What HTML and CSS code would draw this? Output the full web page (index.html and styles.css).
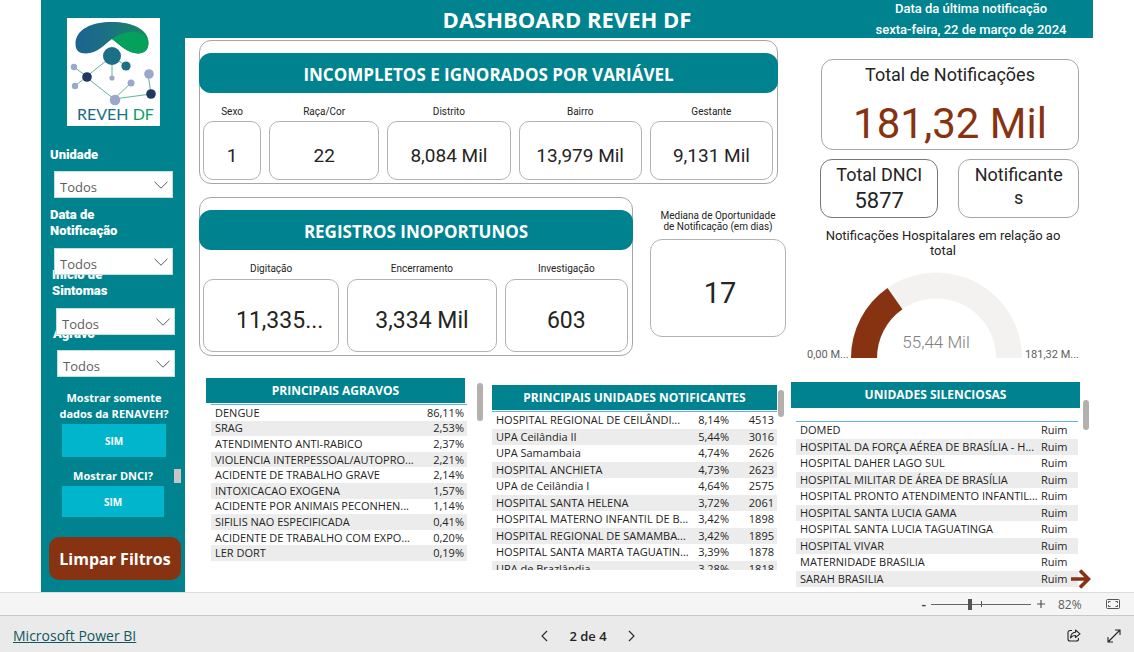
FILE: index.html
```html
<!DOCTYPE html>
<html lang="pt-BR">
<head>
<meta charset="utf-8">
<title>Dashboard REVEH DF</title>
<link rel="stylesheet" href="styles.css">
</head>
<body>
<div class="report">
  <aside class="sidebar">
    <svg class="logo" viewBox="0 0 93 108" role="img" aria-label="REVEH DF">
      <defs>
        <linearGradient id="cap" x1="0" x2="1" y1="0" y2="0">
          <stop offset="0" stop-color="#1c6391"/><stop offset="0.5" stop-color="#1b7380"/><stop offset="1" stop-color="#158a62"/>
        </linearGradient>
        <linearGradient id="name" x1="0" x2="1" y1="0" y2="0">
          <stop offset="0" stop-color="#1b6485"/><stop offset="0.6" stop-color="#1b7482"/><stop offset="0.75" stop-color="#0c9a66"/><stop offset="1" stop-color="#07a05e"/>
        </linearGradient>
      </defs>
      <rect width="93" height="108" fill="#fff"/>
      <path d="M8.500 26C8.500 11 25 4 45 4s36.500 7 36.500 21c0 7-4 10.500-10.500 10.500C61 35.500 53 27 45 21c-8 6-15 14.500-26 14.500-7 0-10.500-3-10.500-9.500z" fill="url(#cap)"/>
      <path d="M45 21c10-8 30-11 36 0 2 9-3 14.500-10 14.500C61 35.500 53 27 45 21z" fill="#04a05c"/>
      <g stroke="#5cb894" stroke-width="1" fill="none">
        <path d="M7 49l12 9M8 68l11-9M19 59L45 38v22M45 38l14 10M19 59l28 22 17-16M47 81l37-5-3-20"/>
      </g>
      <circle cx="45" cy="38" r="9" fill="#1b6f86"/>
      <circle cx="59" cy="48" r="4.6" fill="#1b6f86"/>
      <g fill="#9ba9c9">
        <circle cx="7" cy="49" r="3.2"/><circle cx="8" cy="68" r="3.2"/><circle cx="45" cy="60" r="2.6"/>
        <circle cx="64" cy="65" r="3.5"/><circle cx="82" cy="56" r="4.8"/><circle cx="48" cy="82" r="5.3"/>
      </g>
      <circle cx="20" cy="59" r="4.8" fill="#203864"/>
      <circle cx="84" cy="76" r="4.8" fill="#203864"/>
      <text x="10" y="102" class="logo-name" fill="url(#name)">REVEH DF</text>
    </svg>

    <div class="filter filter-unit">
      <label for="unidade">Unidade</label>
      <div class="pick"><select id="unidade"><option>Todos</option></select>
        <svg viewBox="0 0 14 8"><path d="M.5.8L7 7.200 13.500.8"/></svg></div>
    </div>
    <div class="filter filter-date">
      <label for="data">Data de Notificação</label>
      <div class="pick"><select id="data"><option>Todos</option></select>
        <svg viewBox="0 0 14 8"><path d="M.5.8L7 7.200 13.500.8"/></svg></div>
    </div>
    <div class="filter filter-onset">
      <label for="inicio">Início de Sintomas</label>
      <div class="pick"><select id="inicio"><option>Todos</option></select>
        <svg viewBox="0 0 14 8"><path d="M.5.8L7 7.200 13.500.8"/></svg></div>
    </div>
    <div class="filter filter-disease">
      <label for="agravo">Agravo</label>
      <div class="pick"><select id="agravo"><option>Todos</option></select>
        <svg viewBox="0 0 14 8"><path d="M.5.8L7 7.200 13.500.8"/></svg></div>
    </div>

    <div class="toggle">
      <p id="q-renaveh">Mostrar somente<br>dados da RENAVEH?</p>
      <button type="button" aria-describedby="q-renaveh">SIM</button>
    </div>
    <div class="toggle toggle-dnci">
      <p id="q-dnci">Mostrar DNCI?</p>
      <button type="button" aria-describedby="q-dnci">SIM</button>
      <span class="side-thumb"></span>
    </div>
    <button type="button" class="clear">Limpar Filtros</button>
  </aside>

  <main class="main">
    <header class="header">
      <h1>DASHBOARD REVEH DF</h1>
      <p class="updated">Data da última notificação<br>sexta-feira, 22 de março de 2024</p>
    </header>

    <div class="overview">
      <div class="groups">
        <section class="group">
          <h2>INCOMPLETOS E IGNORADOS POR VARIÁVEL</h2>
          <div class="cards cards-five">
            <div class="metric"><h3>Sexo</h3><p>1</p></div>
            <div class="metric"><h3>Raça/Cor</h3><p>22</p></div>
            <div class="metric"><h3>Distrito</h3><p>8,084 Mil</p></div>
            <div class="metric"><h3>Bairro</h3><p>13,979 Mil</p></div>
            <div class="metric"><h3>Gestante</h3><p>9,131 Mil</p></div>
          </div>
        </section>
        <div class="late-row">
          <section class="group group-late">
            <h2>REGISTROS INOPORTUNOS</h2>
            <div class="cards cards-three">
              <div class="metric"><h3>Digitação</h3><p class="cut">11,335...</p></div>
              <div class="metric"><h3>Encerramento</h3><p>3,334 Mil</p></div>
              <div class="metric"><h3>Investigação</h3><p>603</p></div>
            </div>
          </section>
          <div class="median">
            <h3>Mediana de Oportunidade<br>de Notificação (em dias)</h3>
            <p>17</p>
          </div>
        </div>
      </div>

      <div class="totals">
        <div class="total-card"><h3>Total de Notificações</h3><p>181,32 Mil</p></div>
        <div class="small-cards">
          <div class="small-card dark"><h3>Total DNCI</h3><p>5877</p></div>
          <div class="small-card"><h3>Notificante<br>s</h3></div>
        </div>
        <h3 class="gauge-title">Notificações Hospitalares em relação ao<br>total</h3>
        <svg class="gauge" viewBox="0 0 272 90">
          <path d="M44 86A85.500 85.500 0 0 1 215 86H189A59.500 59.500 0 0 0 70 86Z" fill="#f3f2f1"/>
          <path d="M44 86A85.500 85.500 0 0 1 80.500 16L95.400 37.300A59.500 59.500 0 0 0 70 86Z" fill="#873312"/>
          <text x="129" y="76" class="gauge-value" text-anchor="middle">55,44 Mil</text>
          <text x="0" y="86" class="gauge-end">0,00 M...</text>
          <text x="272" y="86" class="gauge-end" text-anchor="end">181,32 M...</text>
        </svg>
      </div>
    </div>

    <div class="tables">
      <section class="panel panel-diseases">
        <div class="panel-body">
          <h2>PRINCIPAIS AGRAVOS</h2>
          <table>
            <tr><td>DENGUE</td><td>86,11%</td></tr>
            <tr><td>SRAG</td><td>2,53%</td></tr>
            <tr><td>ATENDIMENTO ANTI-RABICO</td><td>2,37%</td></tr>
            <tr><td>VIOLENCIA INTERPESSOAL/AUTOPRO...</td><td>2,21%</td></tr>
            <tr><td>ACIDENTE DE TRABALHO GRAVE</td><td>2,14%</td></tr>
            <tr><td>INTOXICACAO EXOGENA</td><td>1,57%</td></tr>
            <tr><td>ACIDENTE POR ANIMAIS PECONHEN...</td><td>1,14%</td></tr>
            <tr><td>SIFILIS NAO ESPECIFICADA</td><td>0,41%</td></tr>
            <tr><td>ACIDENTE DE TRABALHO COM EXPO...</td><td>0,20%</td></tr>
            <tr><td>LER DORT</td><td>0,19%</td></tr>
          </table>
        </div>
        <span class="thumb"></span>
      </section>
      <section class="panel panel-units">
        <div class="panel-body">
          <h2>PRINCIPAIS UNIDADES NOTIFICANTES</h2>
          <div class="clip">
          <table>
            <tr><td>HOSPITAL REGIONAL DE CEILÂNDI...</td><td>8,14%</td><td>4513</td></tr>
            <tr><td>UPA Ceilândia II</td><td>5,44%</td><td>3016</td></tr>
            <tr><td>UPA Samambaia</td><td>4,74%</td><td>2626</td></tr>
            <tr><td>HOSPITAL ANCHIETA</td><td>4,73%</td><td>2623</td></tr>
            <tr><td>UPA de Ceilândia I</td><td>4,64%</td><td>2575</td></tr>
            <tr><td>HOSPITAL SANTA HELENA</td><td>3,72%</td><td>2061</td></tr>
            <tr><td>HOSPITAL MATERNO INFANTIL DE B...</td><td>3,42%</td><td>1898</td></tr>
            <tr><td>HOSPITAL REGIONAL DE SAMAMBA...</td><td>3,42%</td><td>1895</td></tr>
            <tr><td>HOSPITAL SANTA MARTA TAGUATIN...</td><td>3,39%</td><td>1878</td></tr>
            <tr><td>UPA de Brazlândia</td><td>3,28%</td><td>1818</td></tr>
          </table>
          </div>
        </div>
        <span class="thumb"></span>
      </section>
      <section class="panel panel-silent">
        <div class="panel-body">
          <h2>UNIDADES SILENCIOSAS</h2>
          <table>
            <tr><td>DOMED</td><td>Ruim</td></tr>
            <tr><td>HOSPITAL DA FORÇA AÉREA DE BRASÍLIA - H...</td><td>Ruim</td></tr>
            <tr><td>HOSPITAL DAHER LAGO SUL</td><td>Ruim</td></tr>
            <tr><td>HOSPITAL MILITAR DE ÁREA DE BRASÍLIA</td><td>Ruim</td></tr>
            <tr><td>HOSPITAL PRONTO ATENDIMENTO INFANTIL...</td><td>Ruim</td></tr>
            <tr><td>HOSPITAL SANTA LUCIA GAMA</td><td>Ruim</td></tr>
            <tr><td>HOSPITAL SANTA LUCIA TAGUATINGA</td><td>Ruim</td></tr>
            <tr><td>HOSPITAL VIVAR</td><td>Ruim</td></tr>
            <tr><td>MATERNIDADE BRASILIA</td><td>Ruim</td></tr>
            <tr><td>SARAH BRASILIA</td><td>Ruim</td></tr>
          </table>
        </div>
        <span class="thumb"></span>
      </section>
    </div>
    <button type="button" class="next-page" aria-label="Próxima página">
      <svg viewBox="0 0 20 20"><path d="M0 10H17M9 1.500L17.500 10L9 18.500" fill="none" stroke="#873312" stroke-width="3.600"/></svg>
    </button>
  </main>
</div>

<div class="zoombar">
  <button type="button" aria-label="Reduzir">-</button>
  <div class="range"><input type="range" min="0" max="100" value="39" aria-label="Zoom"><span class="tick"></span></div>
  <button type="button" aria-label="Ampliar"><svg width="8" height="8" viewBox="0 0 8 8"><path d="M4 0v8M0 4h8" stroke="#555" stroke-width="1.200"/></svg></button>
  <span class="percent">82%</span>
  <button type="button" class="fit" aria-label="Ajustar à página">
    <svg width="14" height="10" viewBox="0 0 14 10" fill="none" stroke="#555"><rect x=".5" y=".5" width="13" height="9" rx="1"/><path d="M2.500 4V2.500H4.500M9.500 2.500H11.500V4M2.500 6V7.500H4.500M9.500 7.500H11.500V6"/></svg>
  </button>
</div>

<footer class="footer">
  <a href="#">Microsoft Power BI</a>
  <nav class="pager">
    <button type="button" aria-label="Anterior"><svg width="7" height="12" viewBox="0 0 7 12"><path d="M6 1L1 6l5 5"/></svg></button>
    <span>2 de 4</span>
    <button type="button" aria-label="Próxima"><svg width="7" height="12" viewBox="0 0 7 12"><path d="M1 1l5 5-5 5"/></svg></button>
  </nav>
  <div class="actions">
    <button type="button" aria-label="Compartilhar"><svg width="14" height="13" viewBox="0 0 14 13"><path d="M5 1.500H3A2 2 0 0 0 1 3.500V10a2 2 0 0 0 2 2h6.500a2 2 0 0 0 2-2V9M8.500 1L13 4.800 8.500 8.500V6.500C6 6.400 4.600 7.200 3.500 9 3.700 5.500 5.500 3.400 8.500 3.200Z" stroke-linejoin="round"/></svg></button>
    <button type="button" aria-label="Tela cheia"><svg width="14" height="14" viewBox="0 0 14 14"><path d="M1 13L13 1M8 1h5v5M1 8v5h5"/></svg></button>
  </div>
</footer>
</body>
</html>
```
FILE: styles.css
```css
* { box-sizing: border-box; }
:root {
  --teal: #00838f;
  --rust: #873312;
  --ui: "Open Sans", "Noto Sans", sans-serif;
  --din: Roboto, "Liberation Sans", sans-serif;
}
body {
  margin: 0;
  min-height: 100vh;
  display: flex;
  flex-direction: column;
  background: #fff;
  color: #252423;
  font-family: var(--ui);
}
h1, h2, h3, p { margin: 0; font-weight: 400; }
button { font-family: inherit; border: 0; padding: 0; background: none; cursor: pointer; }

.report { flex: 1; display: flex; margin: 0 41px; }

/* Sidebar */
.sidebar {
  flex: none;
  width: 144px;
  padding: 18px 4px 0 8px;
  background: var(--teal);
  color: #fff;
}
.logo { display: block; width: 93px; height: 108px; margin-left: 18px; }
.logo-name { font: 16px Lato, sans-serif; }
.filter label {
  display: block;
  width: 90px;
  font: 900 13px/16px var(--din);
}
.filter-unit { padding: 21px 0 0 1px; }
.filter-date { padding: 9px 0 0 1px; }
.filter-onset { padding: 0 0 0 3px; margin-top: -8px; }
.filter-disease { padding: 0 0 0 4px; margin-top: -9px; }
.pick { position: relative; z-index: 1; width: 119px; margin: 8px 0 0 4px; }
.filter-date .pick { margin-top: 9px; }
.filter-onset .pick { margin-top: 9px; }
.filter-disease .pick { width: 118px; }
.pick select {
  display: block;
  width: 100%;
  height: 27px;
  padding: 4px 24px 0 5px;
  border: 1px solid #c8dfe2;
  border-radius: 0;
  appearance: none;
  background: #fff;
  color: #605e5c;
  font: 13px/18px var(--ui);
}
.pick svg {
  position: absolute;
  right: 5px;
  top: 10px;
  width: 14px;
  height: 8px;
  fill: none;
  stroke: #605e5c;
  pointer-events: none;
}
.toggle { padding: 13px 0 0 13px; width: 117px; }
.toggle p {
  margin: 0 -12px 2px;
  text-align: center;
  font: 700 11px/16px var(--ui);
}
.toggle button {
  display: block;
  width: 100%;
  height: 33px;
  background: #00b5cc;
  color: #fff;
  font-size: 10px;
  font-weight: 700;
}
.toggle-dnci { position: relative; padding-top: 11px; width: 115px; }
.toggle-dnci button { height: 31px; }
.side-thumb { position: absolute; left: 125px; top: 12px; width: 7px; height: 14px; background: #c8c6c4; }
.clear {
  display: block;
  width: 100%;
  height: 43px;
  margin-top: 20px;
  border-radius: 10px;
  background: var(--rust);
  color: #fff;
  font-size: 16px;
  font-weight: 700;
}

/* Header */
.main { position: relative; flex: 1; min-width: 0; }
.header {
  display: grid;
  grid-template-columns: 1fr 244px;
  height: 38px;
  background: var(--teal);
  color: #fff;
  text-align: center;
}
.header h1 { padding-left: 100px; font-size: 22px; line-height: 38px; font-weight: 700; }
.updated { margin-top: -2px; font: 500 13px/21px var(--din); }

/* Metric groups */
.overview { display: flex; gap: 21px; padding: 2px 14px 0; }
.groups { flex: 1; min-width: 0; }
.group { margin-right: 8px; padding: 12px 4px 3px 3px; border: 1px solid #a6a6a6; border-radius: 12px; }
.group h2 {
  margin: 0 -5px 0 -4px;
  padding-top: 3px;
  border-radius: 12px;
  background: var(--teal);
  color: #fff;
  text-align: center;
  font-size: 17px;
  line-height: 37px;
  font-weight: 700;
}
.cards { display: grid; gap: 8px; }
.cards-five { grid-template-columns: 58fr 110fr 123fr 123fr 123fr; }
.cards-three { grid-template-columns: 137fr 150fr 124fr; }
.metric { min-width: 0; }
.metric h3 { padding-top: 10px; text-align: center; font: 10px/18px var(--din); }
.metric p {
  height: 59px;
  padding-top: 8px;
  border: 1px solid #b3b3b3;
  border-radius: 10px;
  text-align: center;
  font: 19px/52px var(--din);
}
.late-row { display: grid; grid-template-columns: 434fr 136fr; gap: 17px; margin-top: 13px; }
.group-late { margin-right: 0; }
.group-late .metric p { height: 73px; margin-top: 1px; padding-top: 10px; font: 23px/62px var(--din); }
.group-late .metric .cut { padding-left: 17px; }
.median { padding-top: 13px; text-align: center; }
.median h3 { margin: 0 -4px; font: 10px/11px var(--din); }
.median p {
  height: 98px;
  margin-top: 7px;
  padding-left: 4px;
  border: 1px solid #b3b3b3;
  border-radius: 12px;
  font: 29px/106px var(--din);
}

/* Totals */
.totals { flex: none; width: 272px; padding-top: 19px; text-align: center; }
.total-card {
  height: 91px;
  margin-left: 14px;
  border: 1px solid #a6a6a6;
  border-radius: 12px;
}
.total-card h3 { font: 18px/30px var(--din); }
.total-card p { color: var(--rust); font: 42px/68px var(--din); }
.small-cards { display: grid; grid-template-columns: 118fr 120fr; gap: 20px; margin: 9px 0 0 13px; }
.small-card { height: 59px; border: 1px solid #a6a6a6; border-radius: 12px; }
.small-card.dark { border-color: #777; }
.small-card h3 { font: 18px/23px var(--din); padding-top: 3px; }
.small-card p { font: 22px/30px var(--din); }
.gauge-title { margin: 10px 0 0; font: 13px/15px var(--din); }
.gauge { display: block; width: 272px; height: 90px; margin-top: 14px; }
.gauge-value { font: 300 17px var(--din); fill: #808080; }
.gauge-end { font: 11px Roboto, sans-serif; fill: #605e5c; }

/* Tables */
.tables {
  display: grid;
  grid-template-columns: 279fr 292fr 298fr;
  gap: 7px;
  margin-top: 16px;
  padding: 0 4px 0 21px;
}
.panel { display: flex; align-items: flex-start; }
.panel-body { flex: 1; min-width: 0; }
.panel h2 {
  background: var(--teal);
  color: #fff;
  text-align: center;
  font-size: 12px;
  line-height: 25px;
  font-weight: 700;
}
table {
  width: 100%;
  border-collapse: separate;
  border-spacing: 0;
  border-top: 1px solid #62b0f0;
  font: 11px/14px var(--ui);
  table-layout: fixed;
}
tr:nth-child(even) { background: #ececec; }
td { padding: 0 3px 0 4px; text-align: right; white-space: nowrap; }
td:first-child { text-align: left; padding-right: 0; }
.thumb { flex: none; width: 6px; height: 38px; border-radius: 3px; background: #b3b0ad; }
.panel-diseases { gap: 10px; padding-right: 2px; }
.panel-diseases h2 { margin-right: 2px; }
.panel-diseases table { width: calc(100% - 5px); margin: 1px 0 0 5px; height: 157px; }
.panel-diseases .thumb { margin-top: 5px; }
.panel-units { gap: 1px; padding-top: 7px; }
.clip { height: 159px; margin-top: 1px; overflow: hidden; }
.panel-units table { height: 166px; }
.panel-units td:nth-child(2) { width: 52px; padding-right: 3px; }
.panel-units td:nth-child(3) { width: 45px; }
.panel-units .thumb { height: 27px; margin-top: 5px; }
.panel-silent { gap: 3px; padding-top: 4px; }
.panel-silent h2 { line-height: 26px; }
.panel-silent table { width: calc(100% - 7px); margin: 13px 2px 0 5px; height: 166px; }
.panel-silent td:nth-child(2) { width: 41px; text-align: left; }
.panel-diseases td:nth-child(2) { width: 58px; }
.panel-silent .thumb { height: 30px; margin-top: 18px; }
.next-page { position: absolute; right: 2px; bottom: 3px; width: 20px; height: 20px; }
.next-page svg { display: block; }

/* Zoom bar and footer */
.zoombar {
  display: flex;
  align-items: center;
  justify-content: flex-end;
  height: 23px;
  padding-right: 14px;
  border-top: 1px solid #dcdcdc;
  background: #f5f5f5;
  color: #605e5c;
  font-size: 12px;
}
.zoombar button { color: #444; font-size: 14px; font-weight: 600; line-height: 16px; }
.range { position: relative; width: 100px; height: 12px; margin: 0 6px 0 5px; }
.range input {
  display: block;
  width: 100%;
  height: 12px;
  margin: 0;
  appearance: none;
  background: linear-gradient(#666, #666) center / 100% 1px no-repeat;
}
.range input::-webkit-slider-thumb { appearance: none; width: 4px; height: 11px; background: #555; }
.tick { position: absolute; left: 50px; top: 3px; width: 1px; height: 6px; background: #555; }
.zoombar svg { display: block; }
.percent { width: 24px; margin: 0 24px 0 13px; }
.footer {
  display: grid;
  grid-template-columns: 1fr auto 1fr;
  align-items: center;
  height: 37px;
  padding: 3px 13px 0;
  border-top: 1px solid #c8c8c8;
  background: #eaeaea;
}
.footer a { color: #11575c; font-size: 14px; }
.footer svg { display: block; fill: none; stroke: #252423; stroke-width: 1.1; }
.pager { display: flex; align-items: center; gap: 21px; margin-left: 42px; font-size: 13px; font-weight: 600; color: #252423; }
.actions { display: flex; justify-content: flex-end; gap: 26px; }
```
